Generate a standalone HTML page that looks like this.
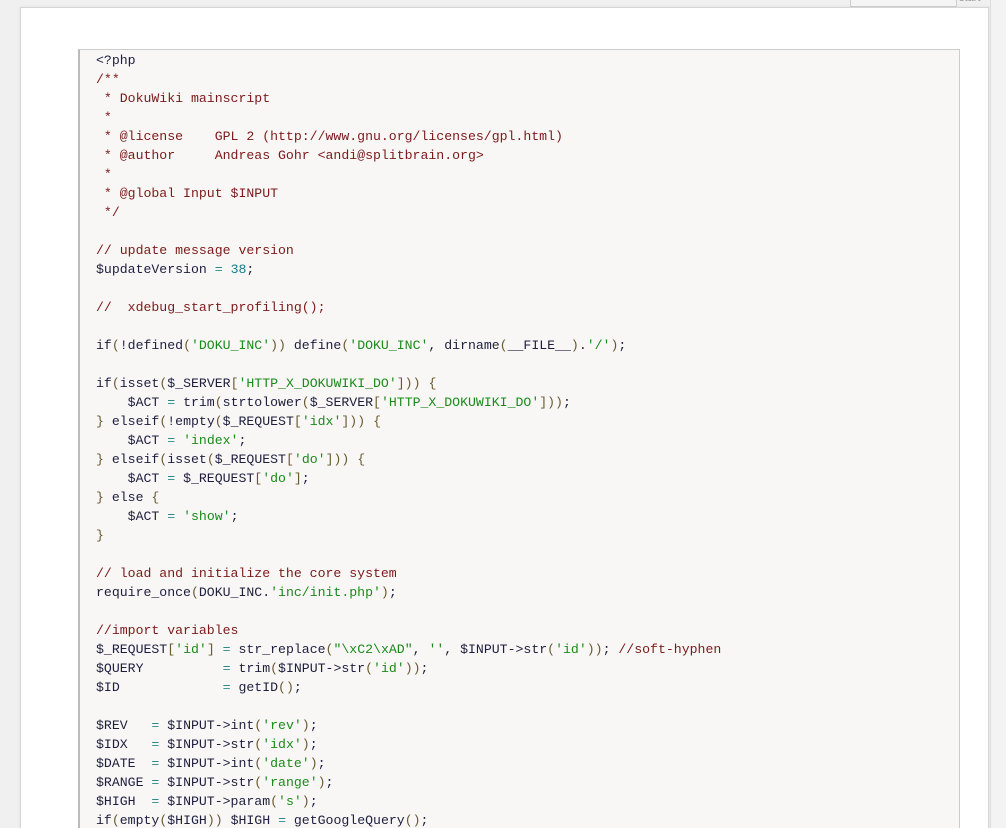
<!DOCTYPE html>
<html><head><meta charset="utf-8"><style>
html,body{margin:0;padding:0;width:1006px;height:828px;overflow:hidden;background:#f0f0f0;font-family:"Liberation Sans",sans-serif;position:relative}
.page{position:absolute;left:20px;top:7px;width:969px;height:821px;background:#fff;border:1px solid #d6d6d6;border-bottom:0;box-sizing:border-box;box-shadow:0 0 3px #ddd}
.tab{position:absolute;left:850px;top:0;width:105px;height:6px;background:#f4f4f4;border:1px solid #ccc;border-top:0}
.start{position:absolute;left:959px;top:-8px;font-size:11px;color:#999}
.rt{position:absolute;left:990px;top:0;width:16px;height:828px;background:#f3f3f3;border-left:1px solid #ddd}
pre{position:absolute;left:78px;top:49px;width:882px;height:779px;box-sizing:border-box;margin:0;padding:1px 0 0 16px;background:#f8f7f6;border:1px solid #ccc;border-left:2px solid #bbb;border-bottom:0;
font-family:"Liberation Mono",monospace;font-size:13.2px;line-height:19px;color:#1e1e3c;white-space:pre;overflow:hidden}
.c{color:#7a1a1a}.s{color:#1a8a1a}.n{color:#1a7a8a}.o{color:#2a8a8a}.b{color:#6a5a30}
</style></head><body>
<div class="rt"></div>
<div class="page"></div>
<div class="tab"></div>
<div class="start">start</div>
<pre>&lt;?php
<span class="c">/**
 * DokuWiki mainscript
 *
 * @license    GPL 2 (http://www.gnu.org/licenses/gpl.html)
 * @author     Andreas Gohr &lt;andi@splitbrain.org&gt;
 *
 * @global Input $INPUT
 */</span>

<span class="c">// update message version</span>
$updateVersion <span class="o">=</span> <span class="n">38</span>;

<span class="c">//  xdebug_start_profiling();</span>

if<span class="b">(</span>!defined<span class="b">(</span><span class="s">'DOKU_INC'</span><span class="b">))</span> define<span class="b">(</span><span class="s">'DOKU_INC'</span>, dirname<span class="b">(</span>__FILE__<span class="b">)</span>.<span class="s">'/'</span><span class="b">)</span>;

if<span class="b">(</span>isset<span class="b">(</span>$_SERVER<span class="b">[</span><span class="s">'HTTP_X_DOKUWIKI_DO'</span><span class="b">]))</span> <span class="b">{</span>
    $ACT <span class="o">=</span> trim<span class="b">(</span>strtolower<span class="b">(</span>$_SERVER<span class="b">[</span><span class="s">'HTTP_X_DOKUWIKI_DO'</span><span class="b">]))</span>;
<span class="b">}</span> elseif<span class="b">(</span>!empty<span class="b">(</span>$_REQUEST<span class="b">[</span><span class="s">'idx'</span><span class="b">]))</span> <span class="b">{</span>
    $ACT <span class="o">=</span> <span class="s">'index'</span>;
<span class="b">}</span> elseif<span class="b">(</span>isset<span class="b">(</span>$_REQUEST<span class="b">[</span><span class="s">'do'</span><span class="b">]))</span> <span class="b">{</span>
    $ACT <span class="o">=</span> $_REQUEST<span class="b">[</span><span class="s">'do'</span><span class="b">]</span>;
<span class="b">}</span> else <span class="b">{</span>
    $ACT <span class="o">=</span> <span class="s">'show'</span>;
<span class="b">}</span>

<span class="c">// load and initialize the core system</span>
require_once<span class="b">(</span>DOKU_INC.<span class="s">'inc/init.php'</span><span class="b">)</span>;

<span class="c">//import variables</span>
$_REQUEST<span class="b">[</span><span class="s">'id'</span><span class="b">]</span> <span class="o">=</span> str_replace<span class="b">(</span><span class="s">"\xC2\xAD"</span>, <span class="s">''</span>, $INPUT-&gt;str<span class="b">(</span><span class="s">'id'</span><span class="b">))</span>; <span class="c">//soft-hyphen</span>
$QUERY          <span class="o">=</span> trim<span class="b">(</span>$INPUT-&gt;str<span class="b">(</span><span class="s">'id'</span><span class="b">))</span>;
$ID             <span class="o">=</span> getID<span class="b">()</span>;

$REV   <span class="o">=</span> $INPUT-&gt;int<span class="b">(</span><span class="s">'rev'</span><span class="b">)</span>;
$IDX   <span class="o">=</span> $INPUT-&gt;str<span class="b">(</span><span class="s">'idx'</span><span class="b">)</span>;
$DATE  <span class="o">=</span> $INPUT-&gt;int<span class="b">(</span><span class="s">'date'</span><span class="b">)</span>;
$RANGE <span class="o">=</span> $INPUT-&gt;str<span class="b">(</span><span class="s">'range'</span><span class="b">)</span>;
$HIGH  <span class="o">=</span> $INPUT-&gt;param<span class="b">(</span><span class="s">'s'</span><span class="b">)</span>;
if<span class="b">(</span>empty<span class="b">(</span>$HIGH<span class="b">))</span> $HIGH <span class="o">=</span> getGoogleQuery<span class="b">()</span>;</pre>
</body></html>
